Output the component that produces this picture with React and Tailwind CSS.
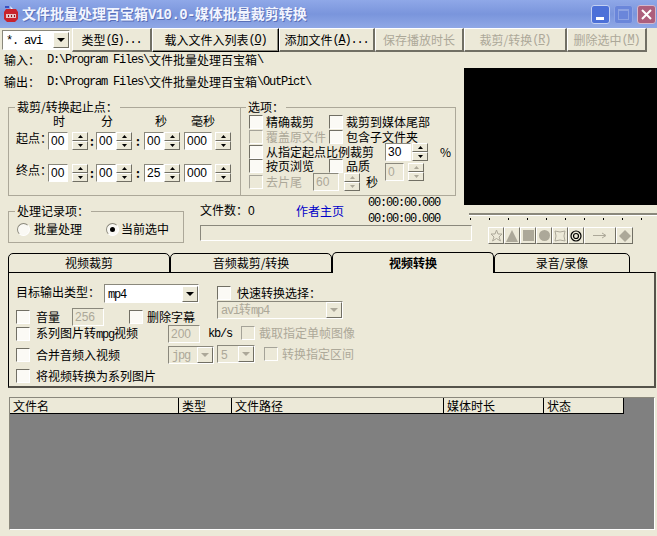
const M = ({ children, className = '' }) => (
	<span className={`font-['Liberation_Mono',monospace] text-[12px] tracking-[-1.2px] shrink-0 ${className}`}>
		{children}
	</span>
);

const raised = 'border border-t-white border-l-white border-r-[#716f64] border-b-[#716f64] bg-[#ece9d8]';
const sunken = 'border border-t-[#8a887c] border-l-[#8a887c] border-r-white border-b-white';

const Check = ({ disabled }) => (
	<span
		className={`w-[14px] h-[14px] shrink-0 border border-r-white border-b-white ${
			disabled ? 'border-t-[#a5a398] border-l-[#a5a398] bg-[#ece9d8]' : 'border-t-[#716f64] border-l-[#716f64] bg-[#fbfaf5]'
		}`}
	/>
);

const Radio = ({ checked }) => (
	<span className="w-[13px] h-[13px] shrink-0 rounded-full border border-t-[#8a887c] border-l-[#8a887c] border-r-white border-b-white bg-[#faf9f4] flex items-center justify-center">
		{checked && <span className="w-[5px] h-[5px] rounded-full bg-black" />}
	</span>
);

const Input = ({ value, className = '', disabled }) => (
	<div
		className={`${sunken} h-[18px] shrink-0 pl-[2px] flex items-center text-[12px] font-['Liberation_Sans',sans-serif] ${
			disabled ? 'bg-[#ece9d8] text-[#aca899]' : 'bg-white text-black'
		} ${className}`}>
		{value}
	</div>
);

const Tri = ({ up, color }) => (
	<svg width="5" height="3" viewBox="0 0 5 3">
		<polygon points={up ? '2.5,0 5,3 0,3' : '0,0 5,0 2.5,3'} fill={color} />
	</svg>
);

const Spin = ({ disabled, className = '' }) => {
	const color = disabled ? '#aca899' : '#000';
	return (
		<div className={`w-[16px] h-[18px] shrink-0 flex flex-col ${className}`}>
			<div className={`${raised} flex-1 flex items-center justify-center`}>
				<Tri up color={color} />
			</div>
			<div className={`${raised} flex-1 flex items-center justify-center`}>
				<Tri color={color} />
			</div>
		</div>
	);
};

const Combo = ({ children, className = '', disabled }) => (
	<div
		className={`${sunken} h-[18px] shrink-0 flex items-center justify-between ${
			disabled ? 'bg-[#ece9d8] text-[#aca899]' : 'bg-white text-black'
		} ${className}`}>
		<div className="pl-[3px] whitespace-nowrap">{children}</div>
		<div className={`${raised} w-[16px] h-[16px] shrink-0 flex items-center justify-center`}>
			<svg width="8" height="4" viewBox="0 0 8 4">
				<polygon points="0,0 8,0 4,4" fill={disabled ? '#aca899' : '#000'} />
			</svg>
		</div>
	</div>
);

const Btn = ({ children, width, disabled, focused }) => (
	<div
		className={`${width} h-[24px] shrink-0 flex items-center justify-center whitespace-nowrap border-t border-l border-t-white border-l-white ${
			focused
				? 'border border-black shadow-[inset_-1px_-1px_0_#8a887c]'
				: 'border-r-2 border-b-2 border-r-[#716f64] border-b-[#716f64]'
		} ${disabled ? 'text-[#aca899]' : 'text-black'}`}>
		{children}
	</div>
);

const Accel = ({ letter }) => (
	<M>
		(<span className="underline">{letter}</span>)
	</M>
);

const Option = ({ label, disabled, className = '' }) => (
	<div className={`flex items-center gap-[3px] shrink-0 whitespace-nowrap ${disabled ? 'text-[#aca899]' : 'text-black'} ${className}`}>
		<Check disabled={disabled} />
		<span>{label}</span>
	</div>
);

const TimeRow = ({ label, values, className = '' }) => (
	<div className={`flex items-center h-[18px] pl-[7px] ${className}`}>
		<span className="w-[32px] mb-[6px] shrink-0 whitespace-nowrap">{label}：</span>
		<Input value={values[0]} className="w-[20px]" />
		<Spin className="ml-[4px]" />
		<span className="w-[8px] text-center font-bold">:</span>
		<Input value={values[1]} className="w-[20px]" />
		<Spin />
		<span className="w-[12px] text-center font-bold">:</span>
		<Input value={values[2]} className="w-[20px]" />
		<Spin />
		<Input value={values[3]} className="w-[28px] ml-[4px]" />
		<Spin className="ml-[3px]" />
	</div>
);

const ToolIcon = ({ children, width = 'w-[16px]' }) => (
	<div className={`${raised} ${width} h-[17px] shrink-0 flex items-center justify-center`}>
		{children}
	</div>
);

const Tab = ({ label, active, width }) => (
	<div
		className={`${width} shrink-0 h-[20px] -mb-px flex items-center justify-center border border-black rounded-t-[5px] ${
			active ? 'border-b-0 h-[21px] font-bold bg-[#ece9d8] z-10' : ''
		}`}>
		{label}
	</div>
);

const columns = [
	{ name: '文件名', width: 'w-[169px]' },
	{ name: '类型', width: 'w-[53px]' },
	{ name: '文件路径', width: 'w-[212px]' },
	{ name: '媒体时长', width: 'w-[100px]' },
	{ name: '状态', width: 'w-[80px]' },
];

export default function App() {
	return (
		<div className="w-[657px] h-[536px] overflow-hidden bg-[#ece9d8] text-black text-[12px] leading-[14px] font-['Noto_Sans_CJK_SC',sans-serif] flex flex-col">
			{/* Title bar */}
			<div className="h-[28px] shrink-0 flex items-center pl-[3px] pr-[1px] bg-gradient-to-b from-[#8fa8e8] via-[#7a95dc] to-[#90a8e6]">
				<svg width="16" height="16" viewBox="0 0 16 16" className="shrink-0">
					<rect x="2" y="0" width="4" height="2" fill="#3a4fc0" />
					<path d="M7 0 L10 3 L8 4 Z" fill="#f4f4f4" />
					<path d="M3 3 H13 L15 6 V13 L12 16 H4 L1 13 V6 Z" fill="#c8232c" />
					<rect x="3" y="8" width="10" height="4" fill="#e8c4c4" />
					<rect x="5" y="9" width="1" height="2" fill="#8c1a20" />
					<rect x="8" y="9" width="1" height="2" fill="#8c1a20" />
					<rect x="11" y="9" width="1" height="2" fill="#8c1a20" />
				</svg>
				<div className="ml-[3px] text-[14px] font-bold text-[#f2f5ff] whitespace-nowrap [text-shadow:1px_1px_0_#5a70b8]">
					文件批量处理百宝箱<span className="font-['Liberation_Mono',monospace] tracking-[-0.6px]">V10.0-</span>媒体批量裁剪转换
				</div>
				<div className="ml-auto flex gap-[4px]">
					<div className="w-[19px] h-[19px] rounded-[3px] border border-[#c3d0f2] bg-[#4c70d8] flex items-end pl-[4px] pb-[3px]">
						<div className="w-[8px] h-[3px] bg-white" />
					</div>
					<div className="w-[19px] h-[19px] rounded-[3px] border border-[#8ea4e4] bg-[#6a86da] flex items-center justify-center">
						<div className="w-[11px] h-[11px] border border-[#8da3e2] border-t-2" />
					</div>
					<div className="w-[19px] h-[19px] rounded-[3px] border border-[#d3b8cc] bg-[#ad5f7c] flex items-center justify-center">
						<svg width="11" height="11" viewBox="0 0 11 11">
							<path d="M1 1 L10 10 M10 1 L1 10" stroke="#fff" strokeWidth="2" />
						</svg>
					</div>
				</div>
			</div>

			{/* Toolbar */}
			<div className="h-[24px] shrink-0 flex items-center pl-[2px]">
				<Combo className="w-[68px] h-[20px] mr-[2px]">
					<M>*. avi</M>
				</Combo>
				<Btn width="w-[80px]">
					类型 <Accel letter="G" /><M>...</M>
				</Btn>
				<Btn width="w-[127px]" focused>
					载入文件入列表 <Accel letter="O" />
				</Btn>
				<Btn width="w-[96px]">
					添加文件 <Accel letter="A" /><M>...</M>
				</Btn>
				<Btn width="w-[89px]" disabled>
					保存播放时长
				</Btn>
				<Btn width="w-[103px]" disabled>
					裁剪/转换 <Accel letter="R" />
				</Btn>
				<Btn width="w-[80px]" disabled>
					删除选中 <Accel letter="M" />
				</Btn>
			</div>

			{/* Upper area */}
			<div className="h-[200px] shrink-0 flex">
				<div className="w-[464px] shrink-0 flex flex-col">
					<div className="h-[22px] pl-[4px] pt-[1px] flex items-start whitespace-nowrap">
						<span className="w-[43px]">输入：</span>
						<M>D:\Program Files\</M>
						<span>文件批量处理百宝箱</span>
						<M>\</M>
					</div>
					<div className="h-[26px] pl-[4px] pt-[1px] flex items-start whitespace-nowrap">
						<span className="w-[43px]">输出：</span>
						<M>D:\Program Files\</M>
						<span>文件批量处理百宝箱</span>
						<M>\OutPict\</M>
					</div>

					<div className="flex ml-[8px] h-[96px]">
						<fieldset className="w-[233px] h-[96px] shrink-0 border border-[#aca899]">
							<legend className="ml-[6px] px-[2px] whitespace-nowrap">裁剪/转换起止点：</legend>
							<div className="h-[14px] flex items-center whitespace-nowrap">
								<span className="ml-[44px]">时</span>
								<span className="ml-[36px]">分</span>
								<span className="ml-[42px]">秒</span>
								<span className="ml-[24px]">毫秒</span>
							</div>
							<TimeRow label="起点" values={['00', '00', '00', '000']} className="mt-[4px]" />
							<TimeRow label="终点" values={['00', '00', '25', '000']} className="mt-[14px]" />
						</fieldset>
						<fieldset className="w-[216px] h-[96px] shrink-0 -ml-px border border-[#aca899]">
							<legend className="ml-[5px] px-[2px] whitespace-nowrap">选项：</legend>
							<div className="h-[15px] flex items-center">
								<Option label="精确裁剪" className="ml-[8px] w-[80px]" />
								<Option label="裁剪到媒体尾部" />
							</div>
							<div className="h-[15px] flex items-center">
								<Option label="覆盖原文件" disabled className="ml-[8px] w-[80px]" />
								<Option label="包含子文件夹" />
							</div>
							<div className="h-[15px] flex items-center">
								<Option label="从指定起点比例裁剪" className="ml-[8px] w-[136px]" />
								<Input value="30" className="w-[26px]" />
								<Spin className="ml-[1px]" />
								<span className="ml-[12px]">%</span>
							</div>
							<div className="h-[15px] flex items-start">
								<Option label="按页浏览" className="ml-[8px] w-[80px]" />
								<Option label="品质" className="w-[56px]" />
								<Input value="0" disabled className="w-[19px] mt-[4px]" />
								<Spin disabled className="ml-[4px] mt-[4px]" />
							</div>
							<div className="h-[15px] flex items-center">
								<Option label="去片尾" disabled className="ml-[8px] w-[64px]" />
								<Input value="60" disabled className="w-[26px]" />
								<Spin disabled className="ml-[5px]" />
								<span className="ml-[6px]">秒</span>
							</div>
						</fieldset>
					</div>

					<div className="flex ml-[8px] mt-[8px]">
						<fieldset className="w-[176px] h-[39px] shrink-0 border border-[#aca899]">
							<legend className="ml-[6px] px-[2px] whitespace-nowrap">处理记录项：</legend>
							<div className="h-[22px] flex items-center whitespace-nowrap">
								<div className="flex items-center gap-[4px] ml-[8px] w-[89px]">
									<Radio />
									<span>批量处理</span>
								</div>
								<div className="flex items-center gap-[2px]">
									<Radio checked />
									<span>当前选中</span>
								</div>
							</div>
						</fieldset>
						<div className="ml-[16px] -mt-[8px] flex flex-col">
							<div className="h-[29px] flex items-center whitespace-nowrap">
								<span className="w-[96px]">文件数：<span className="font-['Liberation_Sans',sans-serif]">0</span></span>
								<span className="w-[72px] text-[#0000c8]">作者主页</span>
								<div className="flex flex-col gap-[2px] leading-[14px]">
									<M>00:00:00.000</M>
									<M>00:00:00.000</M>
								</div>
							</div>
							<div className={`${sunken} w-[272px] h-[16px]`} />
						</div>
					</div>
				</div>

				<div className="flex-1 pt-[16px] flex flex-col">
					<div className="h-[137px] bg-black" />
					<div className="mt-[8px] ml-[5px]">
						<div className="h-[3px] bg-[#8a887c] border-b border-white" />
						<div className="mt-[2px] flex gap-[18px] pl-px">
							{[0, 1, 2, 3, 4, 5, 6, 7, 8, 9].map((i) => (
								<span key={i} className="w-px h-[2px] bg-black shrink-0" />
							))}
						</div>
					</div>
					<div className="mt-[7px] ml-[24px] flex">
						<ToolIcon>
							<svg width="13" height="13" viewBox="0 0 13 13">
								<polygon points="6.5,1 8,5 12,5 9,8 10.5,12 6.5,9.5 2.5,12 4,8 1,5 5,5" fill="none" stroke="#aca899" />
							</svg>
						</ToolIcon>
						<ToolIcon>
							<svg width="12" height="12" viewBox="0 0 12 12">
								<polygon points="6,0 12,12 0,12" fill="#aca899" />
							</svg>
						</ToolIcon>
						<ToolIcon>
							<div className="w-[11px] h-[11px] bg-[#aca899]" />
						</ToolIcon>
						<ToolIcon>
							<div className="w-[11px] h-[11px] rounded-full bg-[#aca899]" />
						</ToolIcon>
						<ToolIcon>
							<svg width="12" height="12" viewBox="0 0 12 12">
								<path d="M1 1 Q6 3 11 1 Q9 6 11 11 Q6 9 1 11 Q3 6 1 1 Z" fill="none" stroke="#aca899" />
							</svg>
						</ToolIcon>
						<ToolIcon>
							<svg width="12" height="12" viewBox="0 0 12 12">
								<circle cx="6" cy="6" r="5" fill="none" stroke="#000" strokeWidth="1.2" />
								<circle cx="6" cy="6" r="2.5" fill="none" stroke="#000" strokeWidth="1.2" />
							</svg>
						</ToolIcon>
						<ToolIcon width="w-[32px]">
							<svg width="14" height="7" viewBox="0 0 14 7">
								<path d="M0 3.5 H12 M9 1 L13 3.5 L9 6" fill="none" stroke="#aca899" />
							</svg>
						</ToolIcon>
						<ToolIcon width="w-[17px]">
							<svg width="12" height="12" viewBox="0 0 12 12">
								<polygon points="6,0 12,6 6,12 0,6" fill="#aca899" />
							</svg>
						</ToolIcon>
					</div>
				</div>
			</div>

			{/* Tabs */}
			<div className="h-[20px] shrink-0 flex pl-[8px] items-end relative">
				<Tab label="视频裁剪" width="w-[162px]" />
				<Tab label="音频裁剪/转换" width="w-[162px]" />
				<Tab label="视频转换" width="w-[162px]" active />
				<Tab label="录音/录像" width="w-[136px]" />
			</div>

			{/* Tab panel */}
			<div className="ml-[8px] mr-px h-[116px] shrink-0 border border-black border-b-2 border-r-2 border-b-[#55534a] border-r-[#55534a] flex pl-[7px] pt-[11px]">
				<div className="w-[201px] shrink-0 flex flex-col">
					<div className="h-[19px] flex items-center whitespace-nowrap">
						<span className="w-[88px] shrink-0 mb-[4px]">目标输出类型：</span>
						<Combo className="w-[95px] h-[19px]">
							<M>mp4</M>
						</Combo>
					</div>
					<div className="mt-[5px] h-[17px] flex items-center whitespace-nowrap">
						<Option label="音量" className="gap-[6px] w-[56px]" />
						<Input value="256" disabled className="w-[32px]" />
						<Option label="删除字幕" className="ml-[25px] gap-[4px]" />
					</div>
					<div className="h-[17px] flex items-center whitespace-nowrap">
						<div className="flex items-center shrink-0 gap-[6px] w-[152px]">
							<Check />
							<span>
								系列图片转<M>mpg</M>视频
							</span>
						</div>
						<Input value="200" disabled className="w-[32px]" />
						<M className="ml-[8px]">kb/s</M>
					</div>
					<div className="mt-[4px] h-[18px] flex items-center whitespace-nowrap">
						<Option label="合并音频入视频" className="gap-[6px] w-[152px]" />
						<Combo disabled className="w-[46px]">
							<M>jpg</M>
						</Combo>
					</div>
					<div className="mt-[3px] h-[18px] flex items-center whitespace-nowrap">
						<Option label="将视频转换为系列图片" className="gap-[6px]" />
					</div>
				</div>
				<div className="flex flex-col whitespace-nowrap">
					<Option label="快速转换选择：" className="gap-[6px] h-[17px]" />
					<Combo disabled className="w-[126px]">
						<M>avi</M>转<M>mp4</M>
					</Combo>
					<Option label="截取指定单帧图像" disabled className="ml-[24px] mt-[5px] h-[17px] gap-[4px]" />
					<div className="mt-[4px] h-[18px] flex items-center">
						<Combo disabled className="w-[38px]">
							<span className="font-['Liberation_Sans',sans-serif]">5</span>
						</Combo>
						<Option label="转换指定区间" disabled className="ml-[9px] gap-[4px]" />
					</div>
				</div>
			</div>

			{/* File list */}
			<div className={`${sunken} mt-[9px] ml-[9px] mr-[2px] h-[133px] shrink-0 bg-[#808080]`}>
				<div className="flex h-[16px]">
					{columns.map((col) => (
						<div
							key={col.name}
							className={`${col.width} shrink-0 bg-[#ece9d8] border-r border-b border-black pl-[3px] flex items-center`}>
							{col.name}
						</div>
					))}
				</div>
			</div>
		</div>
	);
}
